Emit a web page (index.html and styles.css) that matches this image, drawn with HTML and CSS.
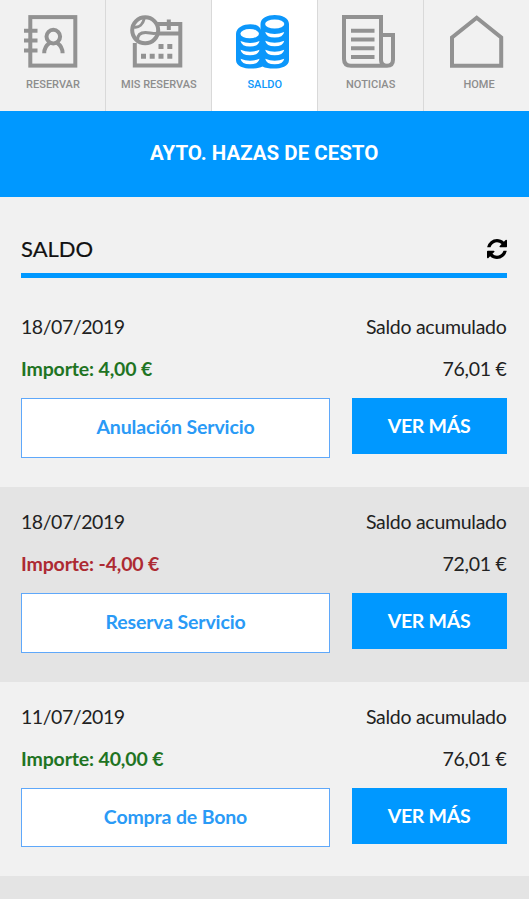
FILE: index.html
```
<!DOCTYPE html>
<html lang="es">
<head>
    <meta charset="UTF-8">
    <title>Saldo</title>
    <link rel="stylesheet" href="styles.css">
</head>
<body>
    <div class="app">
        <nav class="tabs">
            <a class="tab">
                <svg class="icon" viewBox="0 0 54 54">
                    <rect x="6.3" y="2.1" width="45" height="48.5"/>
                    <path d="M0 15.7h13.5M0 25.4h13.5M0 35.5h13.5"/>
                    <circle cx="29.3" cy="21.6" r="6.8"/>
                    <path d="M20.2 38.3c0-5 1.8-8 5.5-10.5M38.6 38.3c0-5-1.8-8-5.5-10.5"/>
                </svg>
                <span>RESERVAR</span>
            </a>
            <a class="tab">
                <svg class="icon" viewBox="0 0 54 54">
                    <path d="M4.8 28v22.5h45.5V9H27M28 18.5h22M38.8 4.5v10.5"/>
                    <circle cx="15.2" cy="15.3" r="13"/>
                    <path class="thin" d="M4 12c5 1 9-3 10.5-9M7.5 25c0-5 3-7.5 8-7.5c5 0 7 2 12 .3"/>
                    <path class="dots" d="M28.5 31.5h5M37.3 31.5h5M11 41.3h5M19.7 41.3h5M28.5 41.3h5M37.3 41.3h5"/>
                </svg>
                <span>MIS RESERVAS</span>
            </a>
            <a class="tab active">
                <svg class="icon" viewBox="0 0 54 54">
                    <path class="fill" d="M0 19c0-12 24.5-12.5 24.5-4V9c0-12 28.5-12 28.5 0v36c0 10-20 10-26.5 6.5C20 55 0 55 0 45z"/>
                    <g class="hole">
                        <ellipse cx="38.7" cy="9" rx="9.6" ry="4.6"/>
                        <ellipse cx="13.7" cy="18.7" rx="9.3" ry="4.6"/>
                        <path d="M29.2 17q9.5 4 19 0q-1 5.5-9.5 5.5t-9.5-5.5z"/>
                        <path d="M29.2 25.7q9.5 4 19 0q-1 5.5-9.5 5.5t-9.5-5.5z"/>
                        <path d="M29.2 34.7q9.5 4 19 0q-1 5.5-9.5 5.5t-9.5-5.5z"/>
                        <path d="M29.2 43.7q9.5 4 19 0q-1 5.5-9.5 5.5t-9.5-5.5z"/>
                        <path d="M4.5 26q9.5 4 19 0q-1 5.5-9.5 5.5t-9.5-5.5z"/>
                        <path d="M4.5 34.7q9.5 4 19 0q-1 5.5-9.5 5.5t-9.5-5.5z"/>
                        <path d="M4.5 43.7q9.5 4 19 0q-1 5.5-9.5 5.5t-9.5-5.5z"/>
                    </g>
                </svg>
                <span>SALDO</span>
            </a>
            <a class="tab">
                <svg class="icon" viewBox="0 0 54 54">
                    <path d="M39 45V2H2v42q0 6.7 7 6.7h36q6 0 6-6V20H39v25q0 5.7 6 5.7"/>
                    <path d="M9 15.7h23.5M9 24.4h23.5M9 33.3h23.5M9 42h23.5"/>
                </svg>
                <span>NOTICIAS</span>
            </a>
            <a class="tab home">
                <svg class="icon" viewBox="0 0 54 54">
                    <path d="M2 22.5L26.7 2.7l24.5 19.8v28.2H2z"/>
                </svg>
                <span>HOME</span>
            </a>
        </nav>

        <header class="banner">AYTO. HAZAS DE CESTO</header>

        <div class="title">
            <h1>SALDO</h1>
            <svg class="refresh" viewBox="0 0 1536 1536">
                <path d="M1511 928q0 5-1 7-64 268-268 434.500T764 1536q-146 0-282.500-55T238 1324l-129 129q-19 19-45 19t-45-19-19-45V960q0-26 19-45t45-19h448q26 0 45 19t19 45-19 45l-137 137q71 66 161 102t187 36q134 0 250-65t186-179q11-17 53-117 8-23 30-23h192q13 0 22.500 9.500t9.500 22.500zm25-800v448q0 26-19 45t-45 19h-448q-26 0-45-19t-19-45 19-45l138-138Q969 256 768 256q-134 0-250 65T332 500q-11 17-53 117-8 23-30 23H50q-13 0-22.500-9.500T18 608v-7q65-268 270-434.500T768 0q146 0 284 55.500T1297 212l130-129q19-19 45-19t45 19 19 45z"/>
            </svg>
        </div>

        <section class="row">
            <div class="line"><span class="date">18/07/2019</span><span>Saldo acumulado</span></div>
            <div class="line"><span class="plus">Importe: 4,00 €</span><span>76,01 €</span></div>
            <div class="actions">
                <div class="concept">Anulación Servicio</div>
                <button class="more">VER MÁS</button>
            </div>
        </section>
        <section class="row">
            <div class="line"><span class="date">18/07/2019</span><span>Saldo acumulado</span></div>
            <div class="line"><span class="minus">Importe: -4,00 €</span><span>72,01 €</span></div>
            <div class="actions">
                <div class="concept">Reserva Servicio</div>
                <button class="more">VER MÁS</button>
            </div>
        </section>
        <section class="row">
            <div class="line"><span class="date">11/07/2019</span><span>Saldo acumulado</span></div>
            <div class="line"><span class="plus">Importe: 40,00 €</span><span>76,01 €</span></div>
            <div class="actions">
                <div class="concept">Compra de Bono</div>
                <button class="more">VER MÁS</button>
            </div>
        </section>
        <section class="row"></section>
    </div>
</body>
</html>
```
FILE: styles.css
```
* {
    margin: 0;
    padding: 0;
    box-sizing: border-box;
}

body {
    background: #fff;
    font-family: Lato, sans-serif;
    font-size: 19.5px;
    letter-spacing: -.28px;
    color: #222;
    overflow: hidden;
}

.app {
    width: 528.5px;
    height: 899px;
    overflow: hidden;
    background: #f1f1f1;
}

.tabs {
    display: flex;
    height: 110.5px;
}

.tab {
    flex: 1;
    display: flex;
    flex-direction: column;
    align-items: center;
    padding: 15px 0 0 1px;
    border-right: 1px solid #d9d9d9;
    font: 500 11px/14px Roboto, sans-serif;
    letter-spacing: 0;
    color: #8d8d8d;
    white-space: nowrap;
}

.tab.active {
    background: #fff;
    color: #0c97fb;
}

.tab.home {
    border-right: none;
}

.tab.home span {
    padding-left: 5px;
}

.icon {
    width: 54px;
    height: 54px;
    margin: 0 4px 8.5px 0;
    overflow: visible;
    fill: none;
    stroke: #929292;
    stroke-width: 4;
}

.home .icon {
    margin-right: 0;
}

.icon .thin {
    stroke-width: 3;
}

.icon .dots {
    stroke-width: 5;
}

.icon .fill {
    fill: #0c97fb;
    stroke: none;
}

.icon .hole {
    fill: #fff;
    stroke: none;
}

.banner {
    height: 86.5px;
    background: #0098ff;
    color: #fff;
    font: 700 20.5px/85px Roboto, sans-serif;
    letter-spacing: 0;
    text-align: center;
}

.title {
    display: flex;
    justify-content: space-between;
    align-items: center;
    height: 81px;
    margin: 0 22px 0 21px;
    padding-top: 27px;
    border-bottom: 5.5px solid #0098ff;
}

.title h1 {
    font-size: 22px;
    font-weight: 400;
    letter-spacing: 0;
    color: #111;
    -webkit-text-stroke: .2px #111;
}

.refresh {
    width: 20px;
    height: 20px;
    fill: #000;
}

.row {
    height: 194.7px;
    padding: 14px 22px 0 21px;
}

.title + .row {
    height: 209px;
    padding-top: 28px;
}

.row:nth-of-type(even) {
    background: #e4e4e4;
}

.line {
    display: flex;
    justify-content: space-between;
    height: 42px;
    line-height: 42px;
}

.date {
    letter-spacing: -.45px;
}

.plus,
.minus {
    font-weight: 700;
    letter-spacing: -.15px;
}

.plus {
    color: #1f7423;
}

.minus {
    color: #ad2a32;
}

.actions {
    display: flex;
    justify-content: space-between;
    align-items: flex-start;
    margin-top: 8px;
}

.concept {
    width: 309px;
    height: 59.5px;
    border: 1.5px solid #5fa8fa;
    background: #fff;
    color: #2a9af6;
    font-weight: 700;
    letter-spacing: -.15px;
    line-height: 56px;
    text-align: center;
}

.more {
    width: 155px;
    height: 56px;
    border: none;
    background: #0098ff;
    color: #fff;
    font: 700 19.5px/54px Lato, sans-serif;
    letter-spacing: -.3px;
}
```
